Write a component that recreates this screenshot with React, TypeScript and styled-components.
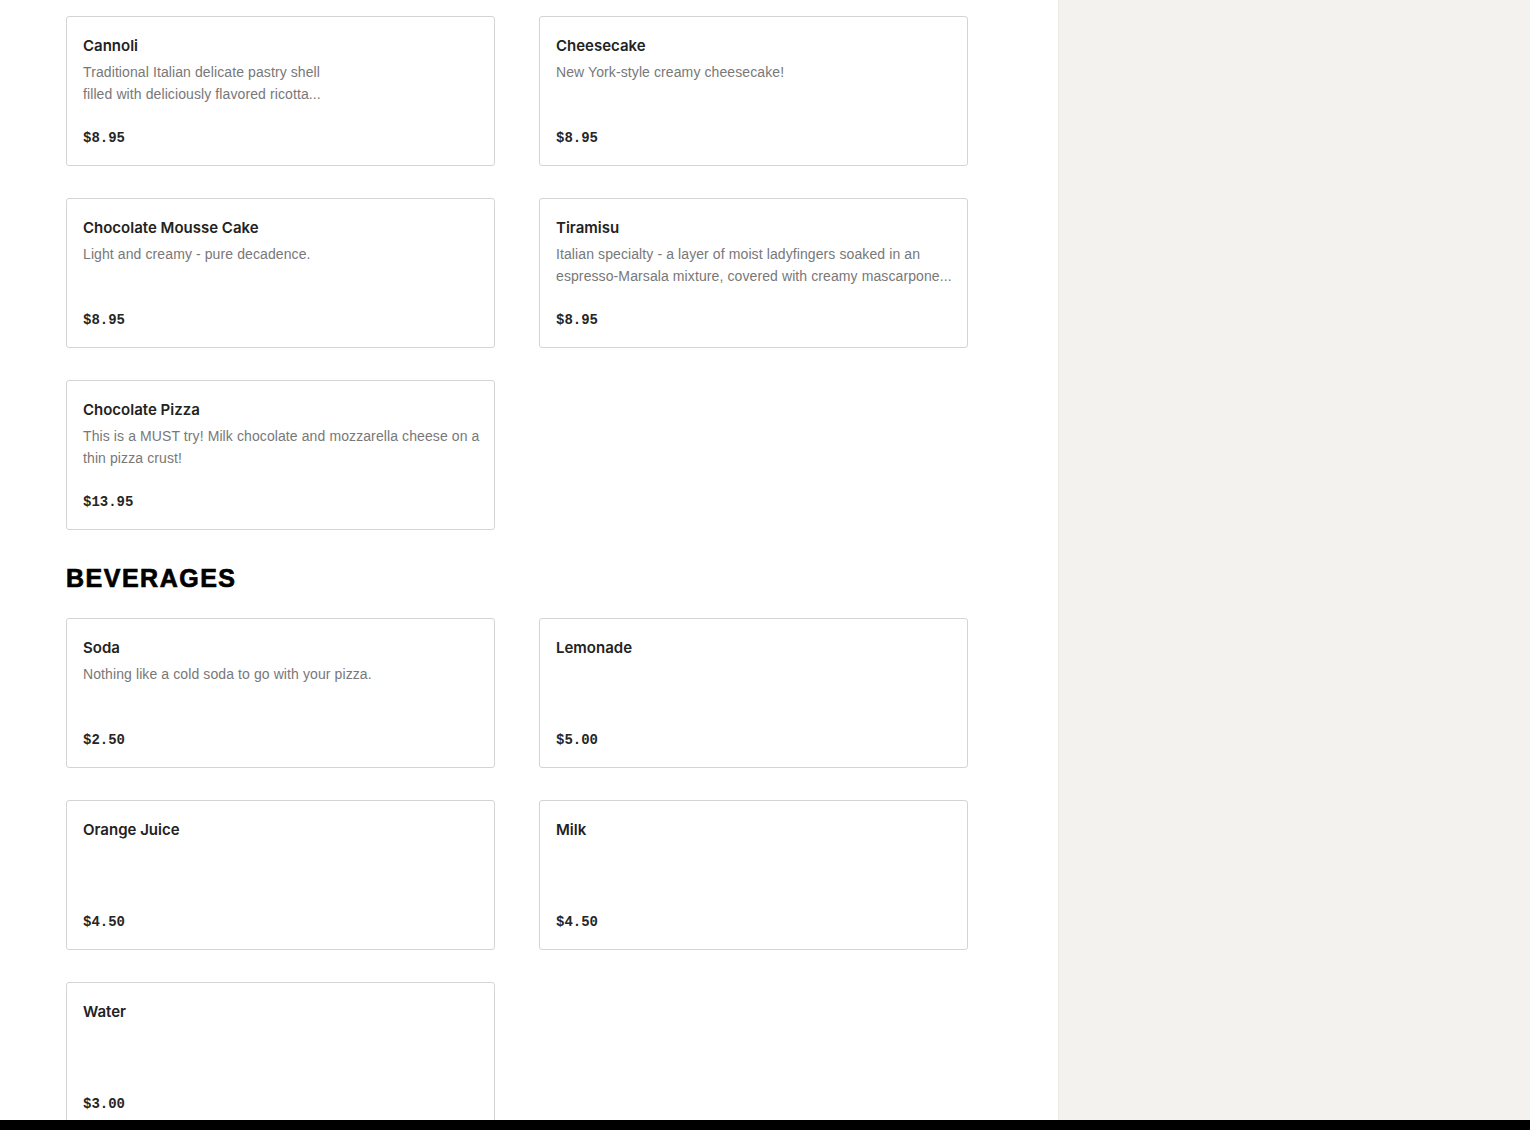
import styled, { createGlobalStyle } from 'styled-components';
import { FC } from 'react';

type Item = {
	name: string;
	lines: string[];
	price: string;
}

type Section = {
	title?: string;
	items: Item[];
}

const sections: Section[] = [
	{
		items: [
			{ name: 'Cannoli', lines: ['Traditional Italian delicate pastry shell', 'filled with deliciously flavored ricotta...'], price: '$8.95' },
			{ name: 'Cheesecake', lines: ['New York-style creamy cheesecake!'], price: '$8.95' },
			{ name: 'Chocolate Mousse Cake', lines: ['Light and creamy - pure decadence.'], price: '$8.95' },
			{ name: 'Tiramisu', lines: ['Italian specialty - a layer of moist ladyfingers soaked in an', 'espresso-Marsala mixture, covered with creamy mascarpone...'], price: '$8.95' },
			{ name: 'Chocolate Pizza', lines: ['This is a MUST try! Milk chocolate and mozzarella cheese on a', 'thin pizza crust!'], price: '$13.95' },
		],
	},
	{
		title: 'BEVERAGES',
		items: [
			{ name: 'Soda', lines: ['Nothing like a cold soda to go with your pizza.'], price: '$2.50' },
			{ name: 'Lemonade', lines: [], price: '$5.00' },
			{ name: 'Orange Juice', lines: [], price: '$4.50' },
			{ name: 'Milk', lines: [], price: '$4.50' },
			{ name: 'Water', lines: [], price: '$3.00' },
		],
	},
];

const MenuCard: FC<{ item: Item }> = ({ item }) => (
	<SCard>
		<SName>{item.name}</SName>
		<SDesc>
			{item.lines.map((line, i) => (
				<SDescLine key={i}>{line}</SDescLine>
			))}
		</SDesc>
		<SPrice>{item.price}</SPrice>
	</SCard>
);

export default function App() {
	return (
		<>
			<GlobalStyle />
			<SPage>
				<SBody>
					<SMain>
						{sections.map((section, i) => (
							<div key={i}>
								{section.title && <SHeading>{section.title}</SHeading>}
								<SGrid>
									{section.items.map((item) => (
										<MenuCard key={item.name} item={item} />
									))}
								</SGrid>
							</div>
						))}
					</SMain>
					<SSidebar />
				</SBody>
				<SFooter />
			</SPage>
		</>
	);
}

const GlobalStyle = createGlobalStyle`
	html, body {
		margin: 0;
		padding: 0;
		background: #fff;
	}
	* {
		box-sizing: border-box;
	}
`

const SPage = styled.div`
	display: flex;
	flex-direction: column;
	height: 100vh;
	overflow: hidden;
`

const SBody = styled.div`
	flex: 1;
	min-height: 0;
	display: flex;
	overflow: hidden;
`

const SMain = styled.main`
	flex: 0 0 1058px;
	padding: 16px 0 0 66px;
	background: #fff;
	position: relative;
	z-index: 1;
`

const SSidebar = styled.aside`
	flex: 1;
	background: #f3f2ee;
	box-shadow: inset 2px 0 2px -1px rgba(0, 0, 0, 0.04);
`

const SFooter = styled.div`
	height: 10px;
	background: #000;
`

const SHeading = styled.h2`
	margin: 33px 0 25px;
	font-family: "Liberation Sans", Arial, sans-serif;
	font-size: 25px;
	line-height: 30px;
	font-weight: 900;
	letter-spacing: 1.5px;
	-webkit-text-stroke: 0.7px #000;
	color: #000;
`

const SGrid = styled.div`
	display: grid;
	grid-template-columns: 429px 429px;
	column-gap: 44px;
	row-gap: 32px;
`

const SCard = styled.div`
	display: flex;
	flex-direction: column;
	height: 150px;
	padding: 17px 16px 16px 16px;
	border: 1px solid #d4d4d4;
	border-radius: 3px;
	background: #fff;
`

const SName = styled.div`
	font-family: Inter, "Liberation Sans", sans-serif;
	font-size: 15px;
	line-height: 24px;
	font-weight: 600;
	color: #222;
`

const SDesc = styled.div`
	margin-top: 3px;
	font-family: "Liberation Sans", Arial, sans-serif;
	font-size: 14px;
	line-height: 22px;
	letter-spacing: 0.1px;
	color: #787878;
`

const SDescLine = styled.span`
	display: block;
	white-space: nowrap;
`

const SPrice = styled.div`
	margin-top: auto;
	font-family: "Liberation Mono", "DejaVu Sans Mono", monospace;
	font-size: 14px;
	line-height: 22px;
	font-weight: 700;
	color: #262626;
`
